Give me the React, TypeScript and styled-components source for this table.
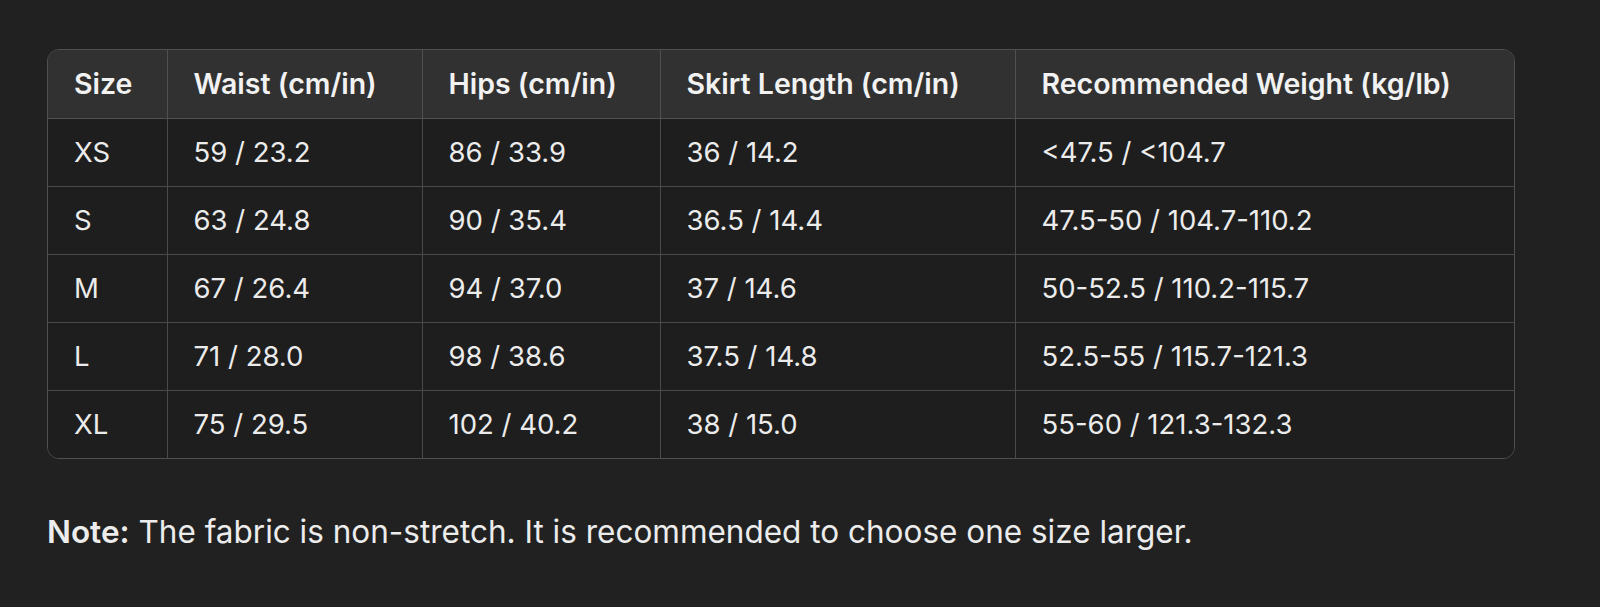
import React from 'react';
import styled, { createGlobalStyle } from 'styled-components';

const GlobalStyle = createGlobalStyle`
  html, body {
    margin: 0;
    padding: 0;
    background: #212121;
  }
  body {
    font-family: Inter, "Noto Sans", "Liberation Sans", sans-serif;
    color: #ececec;
  }
`;

const Page = styled.div`
  box-sizing: border-box;
  width: 1600px;
  height: 607px;
  padding: 49px 0 0 47px;
  background: #212121;
`;

const TableWrap = styled.div`
  box-sizing: border-box;
  width: 1468px;
  border: 1.5px solid #505050;
  border-radius: 12px;
  overflow: hidden;
`;

const Table = styled.table`
  width: 100%;
  border-collapse: collapse;
  table-layout: fixed;
`;

const HeadCell = styled.th<{ $w: number }>`
  box-sizing: border-box;
  width: ${(p) => p.$w}px;
  height: 68px;
  padding: 0 26px;
  text-align: left;
  white-space: nowrap;
  font-size: 28.5px;
  font-weight: 600;
  color: #f2f2f2;
  background: #313131;
  border-left: 1.5px solid #505050;
  border-bottom: 1.5px solid #505050;
  &:first-child {
    border-left: none;
  }
`;

const Cell = styled.td`
  box-sizing: border-box;
  height: 68px;
  padding: 0 26px;
  white-space: nowrap;
  font-size: 27.5px;
  font-weight: 400;
  color: #ececec;
  background: #1e1e1e;
  border-left: 1.5px solid #4a4a4a;
  border-top: 1.5px solid #4a4a4a;
  &:first-child {
    border-left: none;
  }
`;

const Row = styled.tr`
  &:first-child td {
    border-top: none;
  }
`;

const Note = styled.p`
  margin: 53px 0 0;
  font-size: 31.5px;
  line-height: 40px;
  color: #ececec;
  strong {
    font-weight: 600;
  }
`;

const columns: [string, number][] = [
  ['Size', 119],
  ['Waist (cm/in)', 255],
  ['Hips (cm/in)', 238],
  ['Skirt Length (cm/in)', 355],
  ['Recommended Weight (kg/lb)', 500],
];

const rows = [
  ['XS', '59 / 23.2', '86 / 33.9', '36 / 14.2', '<47.5 / <104.7'],
  ['S', '63 / 24.8', '90 / 35.4', '36.5 / 14.4', '47.5-50 / 104.7-110.2'],
  ['M', '67 / 26.4', '94 / 37.0', '37 / 14.6', '50-52.5 / 110.2-115.7'],
  ['L', '71 / 28.0', '98 / 38.6', '37.5 / 14.8', '52.5-55 / 115.7-121.3'],
  ['XL', '75 / 29.5', '102 / 40.2', '38 / 15.0', '55-60 / 121.3-132.3'],
];

export default function App() {
  return (
    <Page>
      <GlobalStyle />
      <TableWrap>
        <Table>
          <thead>
            <tr>
              {columns.map(([label, w]) => (
                <HeadCell key={label} $w={w}>
                  {label}
                </HeadCell>
              ))}
            </tr>
          </thead>
          <tbody>
            {rows.map((r) => (
              <Row key={r[0]}>
                {r.map((v, i) => (
                  <Cell key={i}>{v}</Cell>
                ))}
              </Row>
            ))}
          </tbody>
        </Table>
      </TableWrap>
      <Note>
        <strong>Note:</strong> The fabric is non-stretch. It is recommended to choose one size larger.
      </Note>
    </Page>
  );
}
